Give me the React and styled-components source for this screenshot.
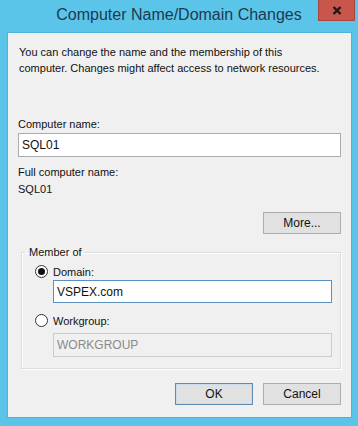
import React from "react";
import styled, { createGlobalStyle } from "styled-components";

const GlobalStyle = createGlobalStyle`
  html, body {
    margin: 0;
    padding: 0;
    background: #5bc5e9;
  }
  * {
    box-sizing: border-box;
  }
`;

const Window = styled.div`
  width: 358px;
  height: 426px;
  background: #5bc5e9;
  display: flex;
  flex-direction: column;
  font-family: "Liberation Sans", Arial, sans-serif;
`;

const TitleBar = styled.div`
  height: 32px;
  display: grid;
  grid-template-columns: 1fr auto 1fr;
  align-items: start;
`;

const Title = styled.div`
  grid-column: 2;
  font-size: 16px;
  line-height: 30px;
  color: #1d3a52;
  white-space: nowrap;
`;

const CloseButton = styled.div`
  grid-column: 3;
  justify-self: end;
  margin-right: 3px;
  width: 37px;
  height: 21px;
  background: #c9564c;
  border: 1px solid #a9443c;
  border-top: none;
  display: flex;
  align-items: center;
  justify-content: center;
`;

const Client = styled.div`
  flex: 1;
  margin: 0 6px 8px 7px;
  background: #f0f0f0;
  border: 1px solid #4fb3dc;
  padding: 12px 10px 0 10px;
  display: flex;
  flex-direction: column;
  font-size: 11px;
  color: #111;
`;

const Intro = styled.p`
  margin: 0 0 0 1px;
  line-height: 15.5px;
`;

const Label = styled.div`
  line-height: 15px;
  margin-top: ${(p) => p.$top || 0}px;
  color: ${(p) => (p.$disabled ? "#6d6d6d" : "#111")};
`;

const TextBox = styled.div`
  height: ${(p) => p.$h || 24}px;
  background: ${(p) => (p.$disabled ? "#f0f0f0" : "#ffffff")};
  border: 1px solid
    ${(p) => (p.$focused ? "#5a8fc0" : p.$disabled ? "#cbcbcb" : "#a9abb0")};
  color: ${(p) => (p.$disabled ? "#8a8a8a" : "#111")};
  font-size: 12px;
  padding: 0 3px;
  display: flex;
  align-items: center;
  margin-top: ${(p) => p.$top || 0}px;
`;

const ButtonRow = styled.div`
  display: flex;
  justify-content: flex-end;
  gap: 10px;
  margin-top: ${(p) => p.$top || 0}px;
`;

const Button = styled.div`
  width: 78px;
  height: 22px;
  background: #e1e1e1;
  border: 1px solid ${(p) => (p.$default ? "#5d8bb5" : "#adadad")};
  box-shadow: ${(p) => (p.$default ? "inset 0 0 0 1px #c8dcee" : "none")};
  display: flex;
  align-items: center;
  justify-content: center;
  font-size: 12px;
  color: #111;
`;

const Group = styled.fieldset`
  margin: 11px 0 0 3px;
  padding: 0 8px 11px 3px;
  border: 1px solid #dcdcdc;
  box-shadow: 1px 1px 0 #ffffff, inset 1px 1px 0 #ffffff;
  min-width: 0;
`;

const Legend = styled.legend`
  padding: 0 2px 0 4px;
  line-height: 15px;
  font-size: 11px;
`;

const GroupBody = styled.div`
  margin-left: 28px;
  display: flex;
  flex-direction: column;
`;

const RadioRow = styled.div`
  display: flex;
  align-items: center;
  height: 15px;
  margin-top: ${(p) => p.$top || 0}px;
  margin-left: -18px;
  gap: 5px;
`;

const RadioCircle = styled.span`
  width: 13px;
  height: 13px;
  border-radius: 50%;
  border: 1px solid #333;
  background: #fff;
  display: flex;
  align-items: center;
  justify-content: center;
  &::after {
    content: "";
    width: 7px;
    height: 7px;
    border-radius: 50%;
    background: ${(p) => (p.$checked ? "#111" : "transparent")};
  }
`;

const Radio = ({ checked, label, top }) => (
  <RadioRow $top={top}>
    <RadioCircle $checked={checked} />
    <span>{label}</span>
  </RadioRow>
);

export default function App() {
  return (
    <>
      <GlobalStyle />
      <Window>
        <TitleBar>
          <Title>Computer Name/Domain Changes</Title>
          <CloseButton>
            <svg width="10" height="9" viewBox="0 0 10 9">
              <path d="M1.5 1 L8.5 8 M8.5 1 L1.5 8" stroke="#1a1a1a" strokeWidth="2.4" />
            </svg>
          </CloseButton>
        </TitleBar>
        <Client>
          <Intro>
            You can change the name and the membership of this
            <br />
            computer. Changes might affect access to network resources.
          </Intro>
          <Label $top={41}>Computer name:</Label>
          <TextBox $top={1}>SQL01</TextBox>
          <Label $top={8}>Full computer name:</Label>
          <Label $top={2}>SQL01</Label>
          <ButtonRow $top={15}>
            <Button>More...</Button>
          </ButtonRow>
          <Group>
            <Legend>Member of</Legend>
            <GroupBody>
              <Radio checked label="Domain:" top={4} />
              <TextBox $h={23} $top={1} $focused>
                VSPEX.com
              </TextBox>
              <Radio label="Workgroup:" top={10} />
              <TextBox $h={24} $top={5} $disabled>
                WORKGROUP
              </TextBox>
            </GroupBody>
          </Group>
          <ButtonRow $top={14}>
            <Button $default>OK</Button>
            <Button>Cancel</Button>
          </ButtonRow>
        </Client>
      </Window>
    </>
  );
}
